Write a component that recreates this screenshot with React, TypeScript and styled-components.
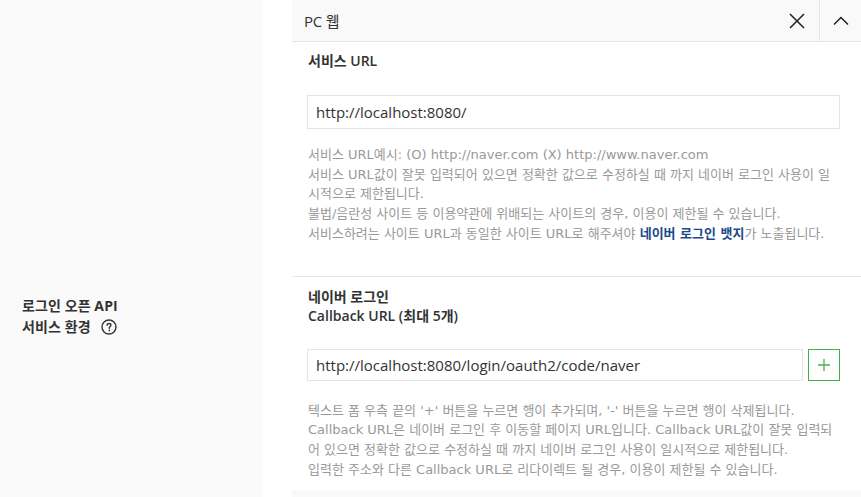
import { createGlobalStyle } from "styled-components";
import styled from "styled-components";

const GlobalStyle = createGlobalStyle`
  html, body {
    margin: 0;
    padding: 0;
    background: #ffffff;
    overflow: hidden;
  }
  body {
    font-family: "Open Sans", "Noto Sans CJK KR", sans-serif;
    color: #333333;
  }
`;

const Page = styled.div`
  display: flex;
  width: 861px;
  height: 497px;
  overflow: hidden;
`;

const LabelColumn = styled.div`
  width: 262px;
  flex-shrink: 0;
  background: #fafafa;
  padding: 295px 0 0 22px;
  box-sizing: border-box;
`;

const FieldLabel = styled.div`
  font-size: 14px;
  font-weight: 700;
  line-height: 21px;
  color: #333333;
  letter-spacing: 0.1px;
`;

const LabelLine = styled.div`
  display: flex;
  align-items: center;
  gap: 10px;
`;

const HelpIcon = styled.svg`
  width: 16px;
  height: 16px;
`;

const ContentColumn = styled.div`
  flex: 1;
  padding-left: 30px;
  display: flex;
  flex-direction: column;
`;

const Panel = styled.div`
  display: flex;
  flex-direction: column;
`;

const PanelHeader = styled.div`
  display: flex;
  align-items: stretch;
  height: 41px;
  background: #f9f9f9;
  border-bottom: 1px solid #e5e5e5;
`;

const PanelTitle = styled.div`
  flex: 1;
  display: flex;
  align-items: center;
  padding-left: 12px;
  font-size: 15px;
  letter-spacing: -0.2px;
`;

const HeaderButton = styled.button<{ $divider?: boolean }>`
  width: ${(p) => (p.$divider ? "46px" : "41px")};
  border: none;
  border-right: ${(p) => (p.$divider ? "1px solid #e5e5e5" : "none")};
  background: transparent;
  padding: 0;
  display: flex;
  align-items: center;
  justify-content: center;
  color: #222222;
`;

const Section = styled.div<{ $top: number; $bottom: number; $divider?: boolean }>`
  padding: ${(p) => p.$top}px 21px ${(p) => p.$bottom}px 15px;
  border-bottom: ${(p) => (p.$divider ? "1px solid #e6e6e6" : "none")};
`;

const SectionTitle = styled.div<{ $lh: number }>`
  font-size: 14px;
  font-weight: 600;
  line-height: ${(p) => p.$lh}px;
  color: #333333;
  padding-left: 1px;
  letter-spacing: 0;
`;

const InputRow = styled.div`
  display: flex;
  gap: 5px;
  margin-top: 24px;
`;

const TextInput = styled.input<{ $h: number }>`
  flex: 1;
  height: ${(p) => p.$h}px;
  box-sizing: border-box;
  border: 1px solid #e5e5e5;
  padding: 0 8px;
  font-family: "Open Sans", "Noto Sans", sans-serif;
  font-size: 15px;
  color: #333333;
  outline: none;
  background: #ffffff;
`;

const AddButton = styled.button`
  width: 32px;
  height: 32px;
  box-sizing: border-box;
  border: 1px solid #3cb24a;
  background: #ffffff;
  padding: 0;
  display: flex;
  align-items: center;
  justify-content: center;
`;

const HelpText = styled.div<{ $gap: number }>`
  margin-top: ${(p) => p.$gap}px;
  padding-left: 1px;
  font-family: "DejaVu Sans", "Noto Sans CJK KR", sans-serif;
  font-size: 13px;
  line-height: 19.7px;
  color: #999999;
`;

const Strong = styled.b`
  color: #1d4a8a;
  font-weight: 700;
`;

const NextItem = styled.div`
  height: 10px;
  background: #f9f9f9;
`;

export default function App() {
  return (
    <>
      <GlobalStyle />
      <Page>
        <LabelColumn>
          <FieldLabel>
            <div>로그인 오픈 API</div>
            <LabelLine>
              서비스 환경
              <HelpIcon viewBox="0 0 16 16" fill="none">
                <circle cx="8" cy="8" r="7" stroke="#333" strokeWidth="1.4" />
                <path
                  d="M6.1 6.3c0-1.1.9-1.8 1.9-1.8s1.9.7 1.9 1.7c0 1.2-1.6 1.4-1.6 2.6v.4"
                  stroke="#333"
                  strokeWidth="1.4"
                  strokeLinecap="round"
                />
                <circle cx="8.3" cy="11.4" r="0.85" fill="#333" />
              </HelpIcon>
            </LabelLine>
          </FieldLabel>
        </LabelColumn>
        <ContentColumn>
          <Panel>
            <PanelHeader>
              <PanelTitle>PC 웹</PanelTitle>
              <HeaderButton $divider aria-label="삭제">
                <svg width="16" height="16" viewBox="0 0 16 16">
                  <path d="M1 1L15 15M15 1L1 15" stroke="#222" strokeWidth="1.5" />
                </svg>
              </HeaderButton>
              <HeaderButton aria-label="접기">
                <svg width="16" height="10" viewBox="0 0 16 10">
                  <path d="M1 8.5L8 1.5L15 8.5" stroke="#222" strokeWidth="1.5" fill="none" />
                </svg>
              </HeaderButton>
            </PanelHeader>

            <Section $top={9} $bottom={32} $divider>
              <SectionTitle $lh={20}>서비스 URL</SectionTitle>
              <InputRow>
                <TextInput $h={34} defaultValue="http://localhost:8080/" />
              </InputRow>
              <HelpText $gap={16}>
                서비스 URL예시: (O) http://naver.com (X) http://www.naver.com
                <br />
                서비스 URL값이 잘못 입력되어 있으면 정확한 값으로 수정하실 때 까지 네이버 로그인 사용이 일시적으로 제한됩니다.
                <br />
                불법/음란성 사이트 등 이용약관에 위배되는 사이트의 경우, 이용이 제한될 수 있습니다.
                <br />
                서비스하려는 사이트 URL과 동일한 사이트 URL로 해주셔야 <Strong>네이버 로그인 뱃지</Strong>가 노출됩니다.
              </HelpText>
            </Section>

            <Section $top={10} $bottom={11}>
              <SectionTitle $lh={19}>
                네이버 로그인
                <br />
                Callback URL (최대 5개)
              </SectionTitle>
              <InputRow>
                <TextInput $h={32} defaultValue="http://localhost:8080/login/oauth2/code/naver" />
                <AddButton aria-label="추가">
                  <svg width="14" height="14" viewBox="0 0 14 14">
                    <path d="M7 1V13M1 7H13" stroke="#4caf50" strokeWidth="1.3" />
                  </svg>
                </AddButton>
              </InputRow>
              <HelpText $gap={20}>
                텍스트 폼 우측 끝의 '+' 버튼을 누르면 행이 추가되며, '-' 버튼을 누르면 행이 삭제됩니다.
                <br />
                Callback URL은 네이버 로그인 후 이동할 페이지 URL입니다. Callback URL값이 잘못 입력되어 있으면 정확한 값으로 수정하실 때 까지 네이버 로그인 사용이 일시적으로 제한됩니다.
                <br />
                입력한 주소와 다른 Callback URL로 리다이렉트 될 경우, 이용이 제한될 수 있습니다.
              </HelpText>
            </Section>
            <NextItem />
          </Panel>
        </ContentColumn>
      </Page>
    </>
  );
}
